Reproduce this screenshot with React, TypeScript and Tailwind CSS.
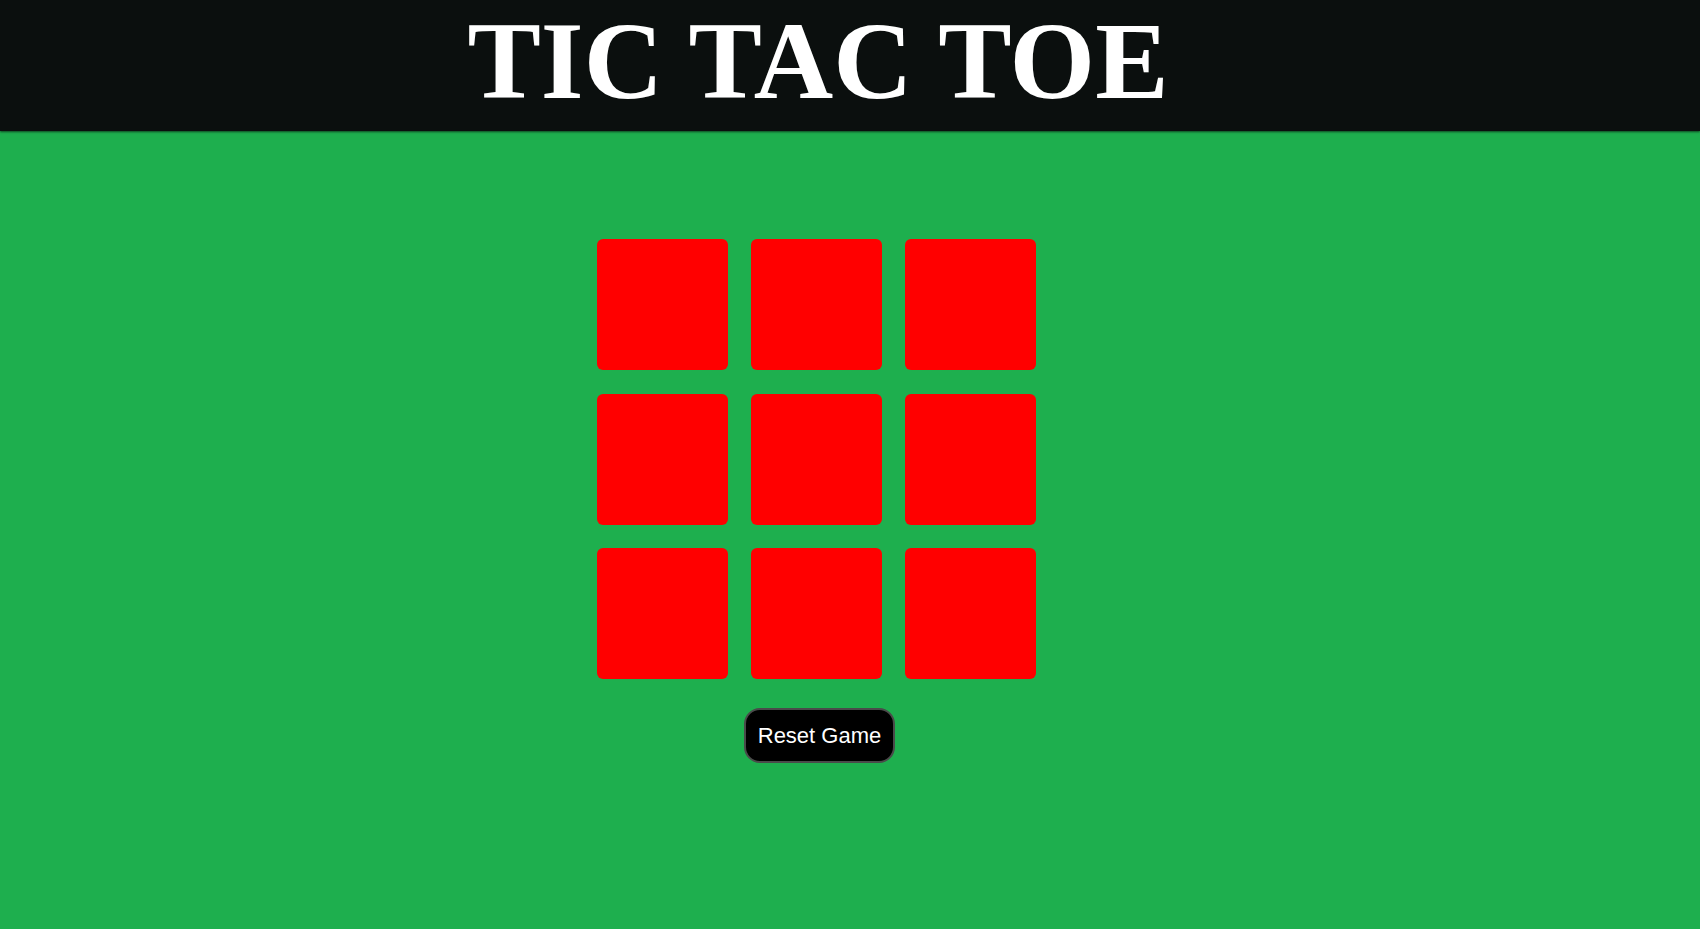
import { useState } from "react";

const App = () => {
  const [board, setBoard] = useState<string[]>(Array(9).fill(""));

  const resetGame = () => setBoard(Array(9).fill(""));

  return (
    <div className="min-h-screen w-full bg-[#1eaf4e]">
      <header className="h-[131px] w-full bg-[#0b0f0e] shadow-[0_1px_2px_rgba(0,0,0,0.6)]">
        <div className="w-[1636px]">
          <h1 className="pt-[6px] text-center text-[110px] leading-none font-bold text-white [font-family:'Liberation_Serif','Times_New_Roman',serif]">
            TIC TAC TOE
          </h1>
        </div>
      </header>
      <main className="flex w-[1636px] flex-col items-center pt-[108px]">
        <div className="mr-[3px] grid grid-cols-[repeat(3,131px)] grid-rows-[repeat(3,131px)] gap-x-[23px] gap-y-[23.5px]">
          {board.map((cell, i) => (
            <div key={i} className="rounded-[6px] bg-[#ff0000]">
              {cell}
            </div>
          ))}
        </div>
        <button
          onClick={resetGame}
          className="mt-[29px] ml-[3px] h-[55px] rounded-[16px] border-2 border-[#4a4a4a] bg-black px-[12px] text-[22px] text-white [font-family:'Liberation_Sans',Arial,sans-serif]"
        >
          Reset Game
        </button>
      </main>
    </div>
  );
};

export default App;
